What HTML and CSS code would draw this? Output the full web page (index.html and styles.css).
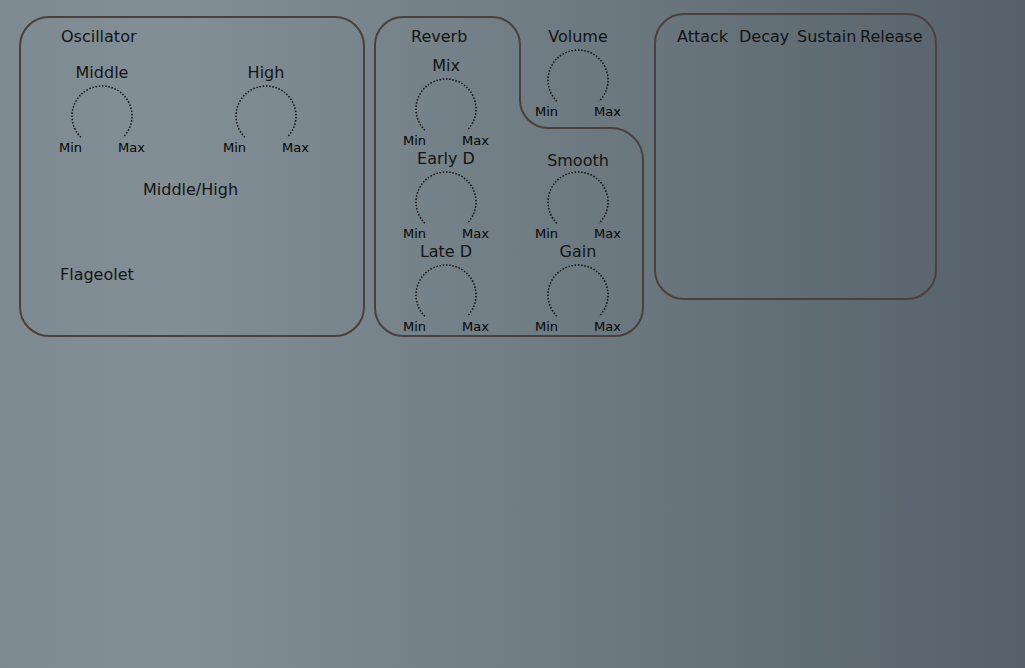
FILE: index.html
```html
<!DOCTYPE html>
<html lang="en">
<head>
	<meta charset="UTF-8">
	<meta name="viewport" content="width=device-width, initial-scale=1.0">
	<title>Synth Panel</title>
	<link rel="stylesheet" href="styles.css">
</head>
<body>
	<div class="rack">
		<!-- Oscillator -->
		<section class="panel osc">
			<div class="osc-title">Oscillator</div>
			<div class="osc-knobs">
				<div class="knob">
					<div class="knob-label">Middle</div>
					<svg class="knob-dial" viewBox="0 0 64 56"><path d="M10.8 53.2A30 30 0 1 1 53.2 53.2"/></svg>
					<div class="knob-range"><span>Min</span><span>Max</span></div>
				</div>
				<div class="knob">
					<div class="knob-label">High</div>
					<svg class="knob-dial" viewBox="0 0 64 56"><path d="M10.8 53.2A30 30 0 1 1 53.2 53.2"/></svg>
					<div class="knob-range"><span>Min</span><span>Max</span></div>
				</div>
			</div>
			<div class="osc-mix">Middle/High</div>
			<div class="osc-flag">Flageolet</div>
		</section>

		<!-- Reverb + volume -->
		<section class="reverb">
			<svg class="reverb-outline" viewBox="0 0 270 321"><path d="M1 29A28 28 0 0 1 29 1H118A28 28 0 0 1 146 29V84A28 28 0 0 0 174 112H237A32 32 0 0 1 269 144V292A28 28 0 0 1 241 320H29A28 28 0 0 1 1 292Z"/></svg>
			<div class="reverb-grid">
				<div class="reverb-first">
					<div class="reverb-title">Reverb</div>
					<div class="knob">
						<div class="knob-label">Mix</div>
						<svg class="knob-dial" viewBox="0 0 64 56"><path d="M10.8 53.2A30 30 0 1 1 53.2 53.2"/></svg>
						<div class="knob-range"><span>Min</span><span>Max</span></div>
					</div>
				</div>
				<div class="knob">
					<div class="knob-label">Volume</div>
					<svg class="knob-dial" viewBox="0 0 64 56"><path d="M10.8 53.2A30 30 0 1 1 53.2 53.2"/></svg>
					<div class="knob-range"><span>Min</span><span>Max</span></div>
				</div>
				<div class="knob">
					<div class="knob-label">Early D</div>
					<svg class="knob-dial" viewBox="0 0 64 56"><path d="M10.8 53.2A30 30 0 1 1 53.2 53.2"/></svg>
					<div class="knob-range"><span>Min</span><span>Max</span></div>
				</div>
				<div class="knob">
					<div class="knob-label knob-label-low">Smooth</div>
					<svg class="knob-dial" viewBox="0 0 64 56"><path d="M10.8 53.2A30 30 0 1 1 53.2 53.2"/></svg>
					<div class="knob-range"><span>Min</span><span>Max</span></div>
				</div>
				<div class="knob">
					<div class="knob-label">Late D</div>
					<svg class="knob-dial" viewBox="0 0 64 56"><path d="M10.8 53.2A30 30 0 1 1 53.2 53.2"/></svg>
					<div class="knob-range"><span>Min</span><span>Max</span></div>
				</div>
				<div class="knob">
					<div class="knob-label">Gain</div>
					<svg class="knob-dial" viewBox="0 0 64 56"><path d="M10.8 53.2A30 30 0 1 1 53.2 53.2"/></svg>
					<div class="knob-range"><span>Min</span><span>Max</span></div>
				</div>
			</div>
		</section>

		<!-- Envelope -->
		<section class="panel env">
			<div class="env-labels">
				<span>Attack</span>
				<span>Decay</span>
				<span>Sustain</span>
				<span>Release</span>
			</div>
		</section>
	</div>
</body>
</html>
```

FILE: styles.css
```css
* {
	margin: 0;
	padding: 0;
	box-sizing: border-box;
}
html {
	background: linear-gradient(90deg, #7e8a91 0%, #838f96 16%, #6f7b82 55%, #55606a 100%);
}
body {
	min-height: 100vh;
	font-family: "DejaVu Sans", sans-serif;
	font-size: 16px;
	line-height: 19px;
	color: #141414;
}

/* Layout */
.rack {
	display: flex;
	align-items: flex-start;
	padding: 16px 0 0 19px;
}
.panel {
	border: 2px solid #4b403d;
	border-radius: 30px;
}

/* Knobs */
.knob {
	width: 86px;
	display: flex;
	flex-direction: column;
	align-items: center;
}
.knob-label {
	line-height: 19px;
	white-space: nowrap;
}
.knob-label-low {
	margin: 2px 0 -2px;
}
.knob-dial {
	width: 64px;
	height: 56px;
	margin-top: 2px;
	fill: none;
	stroke: #050505;
	stroke-width: 1.5;
	stroke-dasharray: 1.4 1.8;
}
.knob-range {
	width: 100%;
	display: flex;
	justify-content: space-between;
	font-size: 13px;
	line-height: 15px;
	color: #050505;
}

/* Oscillator */
.osc {
	width: 346px;
	height: 321px;
	padding: 9px 0 0 38px;
}
.osc-title {
	margin-left: 2px;
}
.osc-knobs {
	display: flex;
	gap: 78px;
	margin-top: 17px;
}
.osc-mix {
	margin: 25px 0 0 84px;
}
.osc-flag {
	margin: 66px 0 0 1px;
}

/* Reverb */
.reverb {
	position: relative;
	width: 270px;
	height: 321px;
	margin-left: 9px;
}
.reverb-outline {
	position: absolute;
	top: 0;
	left: 0;
	width: 270px;
	height: 321px;
	fill: none;
	stroke: #4b403d;
	stroke-width: 2;
}
.reverb-grid {
	position: relative;
	display: grid;
	grid-template-columns: 86px 86px;
	column-gap: 46px;
	row-gap: 1px;
	align-items: start;
	padding: 11px 0 0 29px;
}
.reverb-title {
	margin: 0 0 10px 8px;
}

/* Envelope */
.env {
	width: 283px;
	height: 287px;
	margin: -3px 0 0 10px;
	padding: 12px 0 0 21px;
}
.env-labels {
	display: grid;
	grid-template-columns: 62px 58px 63px auto;
}
```
